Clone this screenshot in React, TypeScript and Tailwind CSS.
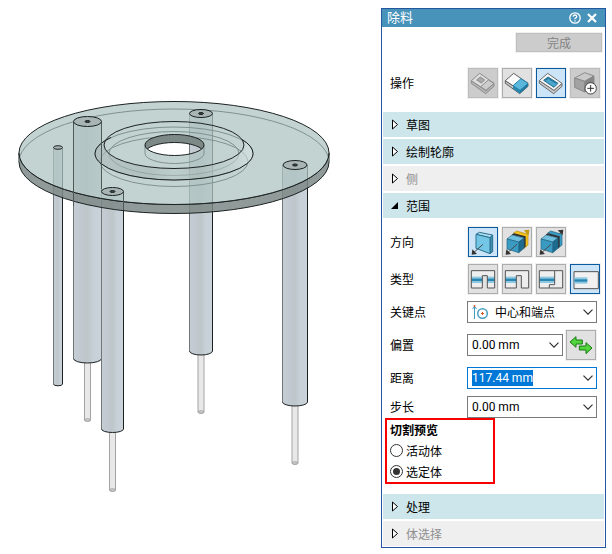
import { useEffect, useRef, useState } from "react";
import type { ReactNode } from "react";

const OUTLINE = "#1c2222";
const HIDDEN = "#7f9190";

interface PostProps {
  cx: number;
  top: number;
  bottom: number;
  rx: number;
  ry: number;
  pinEnd?: number;
}

function Post({ cx, top, bottom, rx, ry, pinEnd }: PostProps) {
  const left = cx - rx;
  const right = cx + rx;
  return (
    <g>
      {pinEnd && (
        <g stroke="#a3a3a3">
          <path
            d={`M${cx - 3} ${bottom}V${pinEnd - 1}a3 1.3 0 0 0 6 0V${bottom}`}
            fill="#e9e8e9"
          />
          <ellipse cx={cx} cy={pinEnd - 1} rx="3" ry="1.2" fill="#d4d4d4" />
        </g>
      )}
      <path
        d={`M${left} ${top}V${bottom}A${rx} ${ry} 0 0 0 ${right} ${bottom}V${top}Z`}
        fill="url(#post)"
      />
      <path d={`M${left} ${top}V${bottom}`} stroke="#6f7779" fill="none" />
      <path
        d={`M${left} ${bottom}A${rx} ${ry} 0 0 0 ${right} ${bottom}V${top}`}
        stroke={OUTLINE}
        fill="none"
      />
    </g>
  );
}

function PostCap({ cx, cy, rx, ry }: { cx: number; cy: number; rx: number; ry: number }) {
  return (
    <g stroke={OUTLINE}>
      <ellipse cx={cx} cy={cy} rx={rx} ry={ry} fill="#a9b5b5" />
      <ellipse cx={cx} cy={cy} rx="2.5" ry="1" fill="#3c4444" />
    </g>
  );
}

function ModelView() {
  return (
    <svg viewBox="0 0 381 554" className="block w-full" role="img" aria-label="3D model">
      <defs>
        <linearGradient id="post">
          <stop offset="0" stopColor="#c6cdd2" />
          <stop offset="0.2" stopColor="#c2cad2" />
          <stop offset="0.5" stopColor="#bdc6c9" />
          <stop offset="0.7" stopColor="#c6d0d7" />
          <stop offset="1" stopColor="#ccd3da" />
        </linearGradient>
        <linearGradient id="step">
          <stop offset="0" stopColor="#a9b8b7" />
          <stop offset="0.35" stopColor="#a4b4b2" />
          <stop offset="0.5" stopColor="#b9c9c7" />
          <stop offset="0.65" stopColor="#a9b9b7" />
          <stop offset="0.85" stopColor="#c0d0ce" />
          <stop offset="1" stopColor="#dde9e7" />
        </linearGradient>
        <clipPath id="hole">
          <ellipse cx="174.5" cy="145" rx="29.5" ry="10.5" />
        </clipPath>
      </defs>

      {/* posts standing behind and below the plate */}
      <Post cx={201} top={114} bottom={351} rx={11.5} ry={4} pinEnd={413} />
      <Post cx={87.5} top={122} bottom={358.5} rx={14} ry={4.5} pinEnd={421} />
      <Post cx={58} top={147.5} bottom={384} rx={4.5} ry={1.8} />
      <Post cx={112.5} top={191.5} bottom={429} rx={11} ry={3.5} pinEnd={491} />
      <Post cx={295} top={165} bottom={402} rx={12.5} ry={4} pinEnd={464} />

      {/* rim and top face of the plate, with the centre hole cut out */}
      <path
        d="M19 153V162A155 51.5 0 0 0 329 162V153A155 51.5 0 0 1 19 153Z"
        fill="#7c8886"
        fillOpacity="0.85"
        stroke={OUTLINE}
      />
      <path
        fillRule="evenodd"
        d="M19 153A155 51.5 0 0 1 329 153A155 51.5 0 0 1 19 153ZM145 145A29.5 10.5 0 0 0 204 145A29.5 10.5 0 0 0 145 145Z"
        fill="#afc4c2"
        fillOpacity="0.75"
      />
      <g fill="none" stroke={HIDDEN}>
        <path d="M19 162A155 53 0 0 1 329 162" />
        <ellipse cx="174" cy="153.5" rx="79" ry="26.5" />
        <ellipse cx="174" cy="161.5" rx="74" ry="25" />
        <ellipse cx="174" cy="153.5" rx="65" ry="22" />
      </g>
      <path
        fillRule="evenodd"
        fill="url(#step)"
        fillOpacity="0.55"
        d="M95 153.5A79 26.5 0 0 0 253 153.5Q251 146 243 140L244 145A70 23.5 0 0 1 104 145L105 141Q95 147 95 153.5Z"
      />
      <g fill="none" stroke={OUTLINE}>
        <ellipse cx="174" cy="153" rx="155" ry="51.5" />
        <ellipse cx="174" cy="145" rx="70" ry="23.5" />
        <path d="M111 137.5Q95 145 95 153.5A79 26.5 0 0 0 253 153.5Q253 146 242 139.5" />
      </g>

      {/* inner wall of the hole */}
      <path d="M145 145V153.5A29.5 10 0 0 0 204 153.5V145" fill="none" stroke={HIDDEN} />
      <g clipPath="url(#hole)">
        <path
          fillRule="evenodd"
          d="M140 130H210V160H140ZM145 153A29.5 10.5 0 0 0 204 153A29.5 10.5 0 0 0 145 153Z"
          fill="#7d8987"
        />
        <ellipse cx="174.5" cy="153" rx="29.5" ry="10.5" fill="none" stroke={OUTLINE} />
      </g>
      <ellipse cx="174.5" cy="145" rx="29.5" ry="10.5" fill="none" stroke={OUTLINE} />

      <path d="M101.5 122V189M73.5 122V206M123.5 192V210" stroke="#4d5857" />
      <PostCap cx={87.5} cy={121.5} rx={14} ry={5} />
      <PostCap cx={201} cy={113.5} rx={11.5} ry={4} />
      <PostCap cx={295} cy={165} rx={12} ry={4.5} />
      <PostCap cx={112.5} cy={191.5} rx={11} ry={4} />
      <ellipse cx="58" cy="147.5" rx="4.5" ry="1.8" fill="#a9b5b5" stroke={OUTLINE} />
    </svg>
  );
}

function Icon({ children }: { children: ReactNode }) {
  return (
    <svg viewBox="3 3 84 84" className="block size-7" strokeWidth="3" strokeLinejoin="round" aria-hidden="true">
      {children}
    </svg>
  );
}

function Slab({ face, side, line }: { face: string; side: string; line: string }) {
  return (
    <g stroke={line}>
      <path d="M10 38V46L53 77L78 55V46L54 67Z" fill={side} />
      <path d="M10 38L35 16L78 46L54 67Z" fill={face} />
    </g>
  );
}

function CutOffIcon() {
  return (
    <Icon>
      <Slab face="#dedede" side="#b4b4b4" line="#8c8c8c" />
      <path d="M26 36L37 27L50 36L40 45Z" fill="#aaa" stroke="#8c8c8c" />
      <path d="M61 36L78 46L54 67L38 56Z" fill="#cdcdcd" stroke="#8c8c8c" />
    </Icon>
  );
}

function EraserIcon() {
  return (
    <Icon>
      <Slab face="#fbfbfb" side="#c4c4c4" line="#5f5f5f" />
      <path d="M33 54L54 67V77L33 62Z" fill="#2789b2" />
      <path d="M54 67L78 46V55L53 77Z" fill="#1f7aa2" />
      <path d="M57 32L78 46L54 67L33 53Z" fill="#5bb8dc" stroke="#2382ab" />
    </Icon>
  );
}

function SlotIcon() {
  return (
    <Icon>
      <Slab face="#f7f7f7" side="#c9c9c9" line="#6b6b6b" />
      <path d="M23 37L36 27L66 46L54 58Z" fill="#4ba7cd" stroke="#1c6a8d" />
      <path d="M27 37L37 31L60 46" fill="none" stroke="#1c6a8d" />
    </Icon>
  );
}

function AddBodyIcon() {
  return (
    <Icon>
      <g stroke="#8b8b8b">
        <path d="M14 30L44 14L72 24L44 40Z" fill="#c9c9c9" />
        <path d="M14 30L44 40V72L14 58Z" fill="#a2a2a2" />
        <path d="M44 40L72 24V56L44 72Z" fill="#858585" />
      </g>
      <circle cx="62" cy="61" r="17" fill="#fff" stroke="#444" />
      <path d="M52 61H72M62 51V71" stroke="#333" />
    </Icon>
  );
}

function FrontArrow() {
  return (
    <g>
      <path d="M45 52L18 76" stroke="#4a4a4a" fill="none" />
      <path d="M11 83L13 67L27 81Z" fill="#333" />
    </g>
  );
}

function OneSideIcon() {
  return (
    <Icon>
      <g stroke="#2c6f8e">
        <path d="M24 22L34 16L74 24L66 32Z" fill="#a9def2" />
        <path d="M66 32L74 24V74L66 80Z" fill="#3c91b4" />
        <path d="M24 22L66 32V80L24 64Z" fill="#74c6e6" />
      </g>
      <FrontArrow />
    </Icon>
  );
}

function BlockIcon({ back, edge, arrow }: { back: string; edge: string; arrow: string }) {
  return (
    <Icon>
      <path d="M64 26L75 17" stroke={arrow} fill="none" />
      <path d="M82 8L65 10L80 25Z" fill={arrow} />
      <path d="M35 18L44 12L78 22V54L66 64V30Z" fill={back} stroke={edge} strokeWidth="2" />
      <path d="M29 23L35 19L71 28V59L65 64V32Z" fill="#303030" />
      <g stroke="#20617f" strokeWidth="2">
        <path d="M15 36L30 24L66 33L50 45Z" fill="#6fc0df" />
        <path d="M50 45L66 33V64L50 77Z" fill="#1d6b8f" />
        <path d="M15 36L50 45V77L15 66Z" fill="#3a9bc2" />
      </g>
      <FrontArrow />
    </Icon>
  );
}

function Band({ to }: { to: number }) {
  return (
    <g>
      <rect x="10" y="38" width={to - 10} height="19" fill="#8cc8e2" />
      <rect x="10" y="44" width={to - 10} height="7" fill="#2a86b0" />
    </g>
  );
}

function NotchIcon({ bandEnd }: { bandEnd: number }) {
  return (
    <Icon>
      <rect x="10" y="20" width="70" height="52" fill="#eee" />
      <Band to={bandEnd} />
      <path d="M43 74V35H58V74Z" fill="#e1e1e1" />
      <path d="M43 72H10V20H80V72H58V35H43Z" fill="none" stroke="#555" />
    </Icon>
  );
}

function FromToIcon() {
  return (
    <Icon>
      <path d="M10 20H80V72H40V62H56V72H10Z" fill="#eee" />
      <Band to={56} />
      <path d="M56 20H10V72H40V62H56M56 20H80V72H40M56 20V62" fill="none" stroke="#555" />
    </Icon>
  );
}

function FiniteIcon() {
  return (
    <Icon>
      <rect x="12" y="23" width="73" height="51" fill="#f1f1f1" stroke="#555" />
      <g transform="translate(3 2)">
        <Band to={49} />
      </g>
    </Icon>
  );
}

function SwapIcon() {
  return (
    <Icon>
      <g fill="#52d53c" stroke="#187a14">
        <path d="M12 36L30 20V30H49V42H30V52Z" />
        <path d="M78 54L60 38V48H40V60H60V71Z" />
      </g>
    </Icon>
  );
}

interface IconButtonProps {
  label: string;
  active?: boolean;
  disabled?: boolean;
  onClick?: () => void;
  children: ReactNode;
}

function IconButton({ label, active, disabled, onClick, children }: IconButtonProps) {
  const tone = disabled
    ? "border-[#bcbcbc] bg-[#cccccc]"
    : active
      ? "border-[#0a5aa0] bg-[#cce4f7]"
      : "border-[#adadad] bg-[#e1e1e1]";
  return (
    <button
      type="button"
      aria-label={label}
      disabled={disabled}
      onClick={onClick}
      className={`size-[30px] shrink-0 border outline outline-[#f0f0f0] ${tone}`}
    >
      {children}
    </button>
  );
}

function Section({ title, open, muted }: { title: string; open?: boolean; muted?: boolean }) {
  return (
    <button
      type="button"
      aria-expanded={!!open}
      className={`flex h-[25px] w-full items-center gap-[7px] pl-2 text-left ${
        muted ? "bg-[#efefef] text-[#8e8e8e]" : "bg-[#cde6eb] text-black"
      }`}
    >
      <svg viewBox="0 0 8 11" className="h-[11px] w-2" aria-hidden="true">
        {open ? (
          <path d="M0 9H7V2Z" fill="#000" />
        ) : (
          <path d="M1.5 1V10L6.5 5.5Z" fill="#fff" stroke="#000" />
        )}
      </svg>
      {title}
    </button>
  );
}

function Chevron() {
  return (
    <svg viewBox="0 0 10 6" className="h-1.5 w-2.5" fill="none" stroke="#333" strokeWidth="1.2" aria-hidden="true">
      <path d="M0.5 0.7L5 5.2L9.500 0.7" />
    </svg>
  );
}

function Row({ label, htmlFor, children }: { label: string; htmlFor?: string; children: ReactNode }) {
  return (
    <div className="flex items-center px-[7px]">
      <label htmlFor={htmlFor} className="w-[77px] shrink-0">
        {label}
      </label>
      {children}
    </div>
  );
}

function ValueBox({ id, initial, focused }: { id: string; initial: string; focused?: boolean }) {
  const [value, setValue] = useState(initial);
  const ref = useRef<HTMLInputElement>(null);

  useEffect(() => {
    if (focused) ref.current?.select();
  }, [focused]);

  return (
    <div
      className={`flex h-[22px] min-w-0 flex-1 items-center border bg-white pr-[3px] pl-1 ${
        focused ? "border-[#0078d7]" : "border-[#7a7a7a]"
      }`}
    >
      <input
        id={id}
        ref={ref}
        value={value}
        onChange={(e) => setValue(e.target.value)}
        className="h-4 min-w-0 flex-1 font-[Roboto,sans-serif] leading-4 outline-none selection:bg-[#0078d7] selection:text-white"
      />
      <button type="button" aria-label="展开">
        <Chevron />
      </button>
    </div>
  );
}

const operations = [
  { label: "拉伸", icon: <CutOffIcon />, disabled: true },
  { label: "移除", icon: <EraserIcon /> },
  { label: "除料", icon: <SlotIcon /> },
  { label: "添加体", icon: <AddBodyIcon />, disabled: true },
];

const directions = [
  { label: "单侧", icon: <OneSideIcon /> },
  { label: "双侧", icon: <BlockIcon back="#f3c31c" edge="#b88a06" arrow="#c79a10" /> },
  { label: "对称", icon: <BlockIcon back="#3a9bc2" edge="#20617f" arrow="#333" /> },
];

const extents = [
  { label: "全部穿透", icon: <NotchIcon bandEnd={80} /> },
  { label: "穿透下一个", icon: <NotchIcon bandEnd={43} /> },
  { label: "起止范围", icon: <FromToIcon /> },
  { label: "有限范围", icon: <FiniteIcon /> },
];

export default function App() {
  const [operation, setOperation] = useState(2);
  const [direction, setDirection] = useState(0);
  const [extent, setExtent] = useState(3);
  const [preview, setPreview] = useState("选定体");

  return (
    <main className="flex items-start bg-white font-['Noto_Sans_CJK_SC',sans-serif] text-xs text-black">
      <div className="min-w-0 flex-1">
        <ModelView />
      </div>

      <aside className="mt-2 mr-1.5 w-[225px] shrink-0 border border-[#2457a0] bg-white">
        <header className="flex h-[18px] items-center justify-between bg-[#4793ba] pr-2 pl-[5px] text-white">
          <h1 className="h-[18px] text-[13px] leading-4">除料</h1>
          <div className="flex items-center gap-1.5">
            <button type="button" aria-label="帮助">
              <svg viewBox="0 0 12 12" className="size-3" fill="none" stroke="#fff" strokeWidth="1.3">
                <circle cx="6" cy="6" r="5.2" />
                <path d="M4.2 4.8Q4.3 3 6 3T7.8 4.7Q7.8 5.6 6 6.4V7.3M6 8.2V9.4" />
              </svg>
            </button>
            <button type="button" aria-label="关闭">
              <svg viewBox="0 0 10 10" className="size-2.5" stroke="#fff" strokeWidth="2.2">
                <path d="M1 1L9 9M9 1L1 9" />
              </svg>
            </button>
          </div>
        </header>

        <div className="flex justify-end pt-1.5 pr-[3px]">
          <button
            type="button"
            disabled
            className="h-[19px] w-[86px] border border-[#bfbfbf] bg-[#cccccc] leading-4 text-[#838383] outline outline-[#f0f0f0]"
          >
            完成
          </button>
        </div>

        <div className="px-px pt-4">
          <Row label="操作">
            <div className="flex gap-1 pl-px">
              {operations.map((item, i) => (
                <IconButton
                  key={item.label}
                  label={item.label}
                  active={operation === i}
                  disabled={item.disabled}
                  onClick={() => setOperation(i)}
                >
                  {item.icon}
                </IconButton>
              ))}
            </div>
          </Row>
        </div>

        <div className="flex flex-col gap-0.5 px-px pt-3.5">
          <Section title="草图" />
          <Section title="绘制轮廓" />
          <Section title="侧" muted />
          <Section title="范围" open />
        </div>

        <div className="flex flex-col gap-[7px] px-px pt-[9px]">
          <Row label="方向">
            <div className="flex gap-1 pl-px">
              {directions.map((item, i) => (
                <IconButton key={item.label} label={item.label} active={direction === i} onClick={() => setDirection(i)}>
                  {item.icon}
                </IconButton>
              ))}
            </div>
          </Row>
          <Row label="类型">
            <div className="flex gap-1 pl-px">
              {extents.map((item, i) => (
                <IconButton key={item.label} label={item.label} active={extent === i} onClick={() => setExtent(i)}>
                  {item.icon}
                </IconButton>
              ))}
            </div>
          </Row>
          <Row label="关键点" htmlFor="keypoint">
            <div className="flex h-[22px] min-w-0 flex-1 items-center border border-[#7a7a7a] pr-[3px] pl-1">
              <svg viewBox="0 0 16 16" className="size-4 shrink-0" fill="none" aria-hidden="true">
                <path d="M2.5 15V3M0.5 5L2.5 2.500L4.5 5" stroke="#3f9cc0" />
                <circle cx="2.5" cy="2" r="1" fill="#d0582b" />
                <circle cx="10.5" cy="9.5" r="4.8" stroke="#4a9fc3" strokeWidth="1.5" />
                <path d="M10.5 8V11M9 9.5H12" stroke="#d0582b" />
              </svg>
              <select id="keypoint" className="h-5 min-w-0 flex-1 appearance-none bg-transparent pl-[7px] leading-5 outline-none">
                <option>中心和端点</option>
                <option>中点</option>
              </select>
              <Chevron />
            </div>
          </Row>
          <Row label="偏置" htmlFor="offset">
            <div className="flex min-w-0 flex-1 items-center gap-[3px] pr-px">
              <ValueBox id="offset" initial="0.00 mm" />
              <IconButton label="反向">
                <SwapIcon />
              </IconButton>
            </div>
          </Row>
          <Row label="距离" htmlFor="distance">
            <ValueBox id="distance" initial="117.44 mm" focused />
          </Row>
          <Row label="步长" htmlFor="step">
            <ValueBox id="step" initial="0.00 mm" />
          </Row>
        </div>

        <div className="px-px">
          <fieldset className="ml-0.5 w-[110px] border-2 border-[#f80000] px-[3px]">
            <div className="leading-5 font-bold">切割预览</div>
            {["活动体", "选定体"].map((name) => (
              <label key={name} className="flex h-[21px] items-center gap-[3px]">
                <input
                  type="radio"
                  name="preview"
                  checked={preview === name}
                  onChange={() => setPreview(name)}
                  className="size-[13px] appearance-none rounded-full border border-[#333] bg-white bg-clip-content p-0.5 checked:bg-[#333]"
                />
                {name}
              </label>
            ))}
          </fieldset>
        </div>

        <div className="flex flex-col gap-0.5 px-px pt-2.5 pb-px">
          <Section title="处理" />
          <Section title="体选择" muted />
        </div>
      </aside>
    </main>
  );
}
